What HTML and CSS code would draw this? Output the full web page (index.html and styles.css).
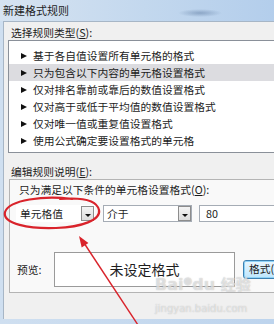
FILE: index.html
```html
<!DOCTYPE html>
<html lang="zh-CN">
<head>
  <meta charset="UTF-8" />
  <title>新建格式规则</title>
  <link rel="stylesheet" href="styles.css">
</head>
<body>

  <div class="window">
    <div class="titlebar">新建格式规则</div>

    <div class="client">
      <div class="label">选择规则类型(<u>S</u>):</div>

      <ul class="rule-list">
        <li><i class="tri"></i>基于各自值设置所有单元格的格式</li>
        <li class="selected"><i class="tri"></i>只为包含以下内容的单元格设置格式</li>
        <li><i class="tri"></i>仅对排名靠前或靠后的数值设置格式</li>
        <li><i class="tri"></i>仅对高于或低于平均值的数值设置格式</li>
        <li><i class="tri"></i>仅对唯一值或重复值设置格式</li>
        <li><i class="tri"></i>使用公式确定要设置格式的单元格</li>
      </ul>

      <div class="label label-edit">编辑规则说明(<u>E</u>):</div>

      <div class="panel">
        <div class="panel-label">只为满足以下条件的单元格设置格式(<u>O</u>):</div>

        <div class="cond-row">
          <div class="combo combo-field">
            <span class="combo-text">单元格值</span>
            <span class="drop"><i></i></span>
          </div>
          <div class="combo combo-op">
            <span class="combo-text">介于</span>
            <span class="drop"><i></i></span>
          </div>
          <div class="textbox">80</div>
        </div>

        <div class="preview-row">
          <span class="preview-label">预览:</span>
          <div class="preview">未设定格式</div>
          <div class="btn">格式(<u>F</u>)...</div>
        </div>
      </div>
    </div>
  </div>

  <!-- red pen marks over the screenshot -->
  <svg class="marks" width="274" height="324" viewBox="0 0 274 324">
    <path d="M72 199 C44 195, 9 200, 5 212 C2 224, 30 229, 56 228 C82 227, 101 220, 99 210 C97 201, 84 197, 60 199"
          fill="none" stroke="#d9232b" stroke-width="2.2" stroke-linecap="round" />
    <line x1="84" y1="243" x2="138" y2="325" stroke="#d9232b" stroke-width="1.4" />
    <polygon points="79,236 81.7,247.4 88.4,243" fill="#d9232b" />
  </svg>

  <div class="watermark">
    <div class="wm-logo">Bai<span class="paw">●</span>du <span class="wm-cn">经验</span></div>
    <div class="wm-url">jingyan.baidu.com</div>
  </div>

</body>
</html>
```

FILE: styles.css
```css
body {
  margin: 0;
  width: 274px;
  height: 324px;
  overflow: hidden;
  position: relative;
  background: #c8daee;
  font-family: "Noto Sans CJK SC", "Noto Sans", sans-serif;
  font-size: 10.75px;
  color: #1c1c1c;
}

u {
  text-decoration: underline;
}

.window {
  width: 360px;
  height: 324px;
  display: flex;
  flex-direction: column;
  background: linear-gradient(to right, #cfdff0, #b7d0ec);
}

.titlebar {
  height: 21px;
  line-height: 20px;
  padding-left: 3px;
  font-size: 11px;
  color: #1e1e1e;
  background:
    radial-gradient(ellipse 22px 4px at 200px 13px, rgba(80, 110, 150, 0.45), transparent),
    linear-gradient(to right, #d6e3f1 0%, #c3d8ee 40%, #a9c7ea 100%);
}

.client {
  flex: 1;
  margin: 0 0 5px 3px;
  padding-left: 4px;
  background: #f0f0f0;
  border-top: 1px solid #a7b6c6;
  border-left: 1px solid #a7b6c6;
  display: flex;
  flex-direction: column;
}

.label {
  height: 14px;
  line-height: 14px;
  margin-top: 4px;
  padding-left: 3px;
}

.label-edit {
  margin-top: 12px;
}

.rule-list {
  list-style: none;
  margin: 0;
  padding: 6px 0 3px 0;
  background: #fff;
  border: 1px solid #8a9099;
  border-right: none;
}

.rule-list li {
  height: 17px;
  line-height: 17px;
  padding-left: 12px;
  display: flex;
  align-items: center;
}

.rule-list li.selected {
  background: #dcdce0;
}

.tri {
  width: 0;
  height: 0;
  border-left: 6px solid #111;
  border-top: 3.5px solid transparent;
  border-bottom: 3.5px solid transparent;
  margin-right: 6px;
}

.panel {
  margin-left: 1px;
  padding: 3px 0 5px 6px;
  background: #f9f9f9;
  border: 1px solid #b4b4b4;
  border-right: none;
}

.panel-label {
  height: 14px;
  line-height: 14px;
  padding-left: 3px;
}

.cond-row {
  display: flex;
  margin-top: 8px;
  height: 17px;
}

.combo {
  display: flex;
  align-items: stretch;
  background: #fff;
  border: 1px solid #a5acb5;
  box-sizing: border-box;
}

.combo-field {
  width: 79px;
  border-color: transparent;
}

.combo-op {
  width: 89px;
  margin-left: 8px;
}

.combo-text {
  flex: 1;
  line-height: 15px;
  padding-left: 3px;
}

.drop {
  width: 13px;
  background: linear-gradient(#f4f4f4, #dcdcdc);
  border: 1px solid #8d8d8d;
  box-sizing: border-box;
  display: flex;
  justify-content: center;
  align-items: center;
}

.drop i {
  width: 0;
  height: 0;
  margin-top: 3px;
  border-top: 3px solid #111;
  border-left: 3px solid transparent;
  border-right: 3px solid transparent;
}

.textbox {
  width: 120px;
  margin-left: 7px;
  padding-left: 6px;
  line-height: 15px;
  background: #fff;
  border: 1px solid #a5acb5;
  box-sizing: border-box;
}

.preview-row {
  display: flex;
  align-items: center;
  margin-top: 30px;
}

.preview-label {
  width: 37px;
  padding-left: 1px;
}

.preview {
  width: 181px;
  height: 35px;
  box-sizing: border-box;
  background: #fff;
  border: 1px solid #9a9a9a;
  font-size: 14px;
  line-height: 33px;
  text-align: center;
  color: #1e1e1e;
}

.btn {
  width: 80px;
  height: 19px;
  margin-left: 8px;
  box-sizing: border-box;
  padding-left: 5px;
  line-height: 16px;
  border: 1px solid #3c7fb1;
  border-radius: 3px;
  background: linear-gradient(#eaf6fd, #bee6fd);
  box-shadow: inset 0 0 0 1px #8fd3f7;
}

.marks {
  position: absolute;
  top: 0;
  left: 0;
  pointer-events: none;
}

.watermark {
  position: absolute;
  left: 155px;
  top: 270px;
  width: 92px;
  text-align: center;
  pointer-events: none;
  color: rgba(255, 255, 255, 0.55);
  text-shadow: 0 0 1px rgba(150, 150, 150, 0.7);
  font-family: "DejaVu Sans", sans-serif;
}

.wm-logo {
  font-size: 16px;
  font-weight: bold;
  line-height: 22px;
  white-space: nowrap;
}

.paw {
  font-size: 10px;
  vertical-align: 6px;
}

.wm-cn {
  font-family: "Noto Sans CJK SC", sans-serif;
  font-size: 15px;
}

.wm-url {
  font-size: 10px;
  line-height: 14px;
  margin-top: 6px;
}
```
